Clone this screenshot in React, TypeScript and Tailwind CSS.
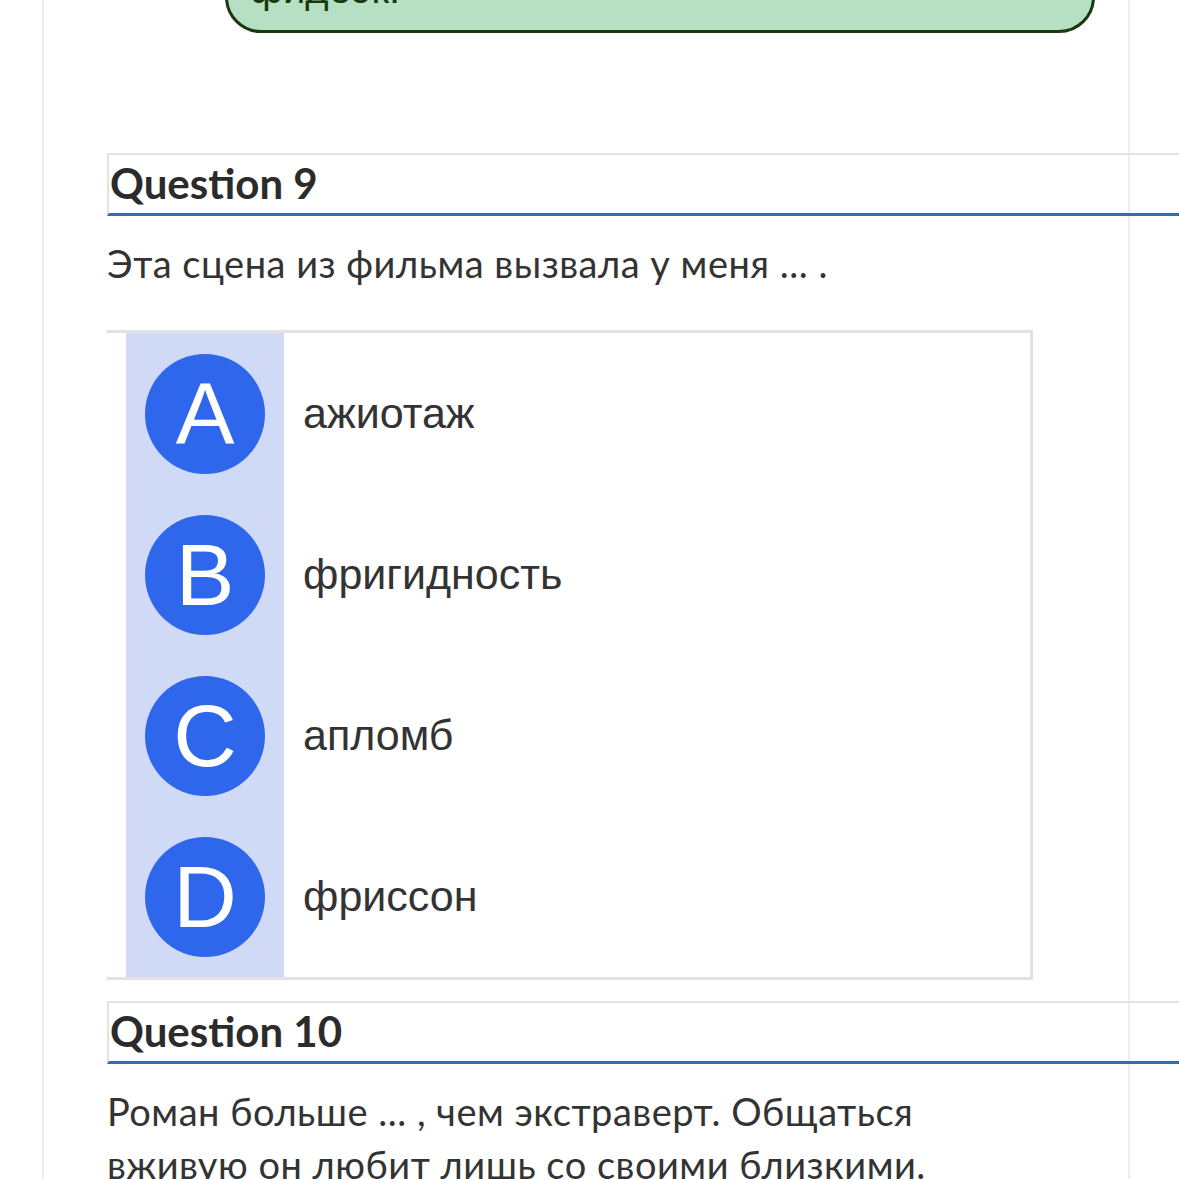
import React from "react";

const OPTIONS = [
  { letter: "A", text: "ажиотаж" },
  { letter: "B", text: "фригидность" },
  { letter: "C", text: "апломб" },
  { letter: "D", text: "фриссон" },
];

function QuestionHeader({ title }: { title: string }) {
  return (
    <div className="w-[1110px] border-t-2 border-l-2 border-[#e3e3e3] border-b-[3px] border-b-[#3a68b9] pt-[2px] pb-[4px] pl-[1px]">
      <h2 className="font-['Lato','Noto_Sans',sans-serif] font-bold text-[42px] leading-[52px] text-[#2b2b2b]">
        {title}
      </h2>
    </div>
  );
}

export default function App() {
  return (
    <div className="w-[1179px] h-[1179px] overflow-hidden bg-white">
      <div className="ml-[42px] w-[1088px] h-[1300px] border-x-2 border-[#ededed] pl-[63px]">
        {/* Feedback bubble, cut off at the top */}
        <div className="ml-[118px] w-[870px] h-[100px] -mt-[67px] rounded-[36px] border-[3px] border-[#18390e] bg-[#b6dfc4] pt-[33px] pl-[22px]">
          <span className="font-['Liberation_Sans',Arial,sans-serif] text-[40px] leading-[40px] text-[#18390e]">
            фидбэк.
          </span>
        </div>

        {/* Question 9 */}
        <div className="mt-[120px]">
          <QuestionHeader title="Question 9" />
          <p className="mt-[21px] font-['Lato','Noto_Sans',sans-serif] text-[38px] leading-[53px] tracking-[0.5px] text-[#333]">
            Эта сцена из фильма вызвала у меня ... .
          </p>

          <div className="mt-[40px] w-[926px] border-t-[3px] border-r-[3px] border-b-[3px] border-[#e2e2e2] pl-[19px]">
            {OPTIONS.map((opt) => (
              <div key={opt.letter} className="flex h-[161px] items-center">
                <div className="flex h-full w-[158px] items-center justify-center bg-[#d0d9f6]">
                  <div className="flex h-[120px] w-[120px] items-center justify-center rounded-full bg-[#2e67ec]">
                    <span className="font-['Liberation_Sans',Arial,sans-serif] text-[88px] leading-none text-white">
                      {opt.letter}
                    </span>
                  </div>
                </div>
                <span className="ml-[19px] font-['Liberation_Sans',Arial,sans-serif] text-[43px] text-[#333]">
                  {opt.text}
                </span>
              </div>
            ))}
          </div>
        </div>

        {/* Question 10 */}
        <div className="mt-[21px]">
          <QuestionHeader title="Question 10" />
          <p className="mt-[21px] w-[840px] font-['Lato','Noto_Sans',sans-serif] text-[38px] leading-[53px] tracking-[0.5px] text-[#333]">
            Роман больше ... , чем экстраверт. Общаться вживую он любит лишь со своими близкими.
          </p>
        </div>
      </div>
    </div>
  );
}
